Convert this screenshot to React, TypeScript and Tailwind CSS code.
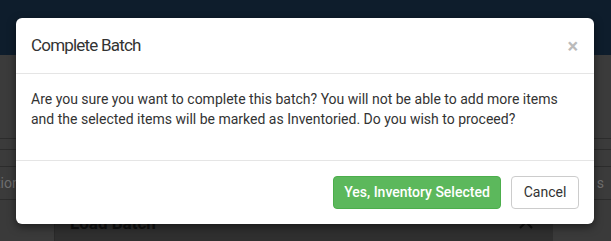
export default function App() {
  return (
    <div className="relative w-[611px] h-[241px] overflow-hidden bg-[#3b3b3b] font-['Roboto',sans-serif]">
      {/* page behind the backdrop */}
      <div className="h-[55px] bg-[#0e1d2c]" />
      <div className="flex flex-col">
        <div className="h-[84px] border-b border-[#2c2c2c]" />
        <div className="h-[11px] border-b border-[#2c2c2c]" />
        <div className="h-[17px] border-b border-[#2c2c2c]" />
        <div className="h-[33px] border-b border-[#2c2c2c] flex items-center justify-between text-[14px] text-[#6f6f6f]">
          <span className="-ml-[4px]">tion</span>
          <span className="mr-[7px]">s</span>
        </div>
        <div className="flex h-[41px]">
          <div className="w-[55px] border-r border-[#2a2a2a] bg-[#3a3a3a]" />
          <div className="w-[498px] bg-[#2f2f2f] flex items-start justify-between px-[15px] pt-[11px]">
            <span className="text-[17px] font-bold text-[#111]">Load Batch</span>
            <svg width="16" height="10" viewBox="0 0 16 10" className="mt-[8px] mr-[4px]">
              <path d="M2 9 L8 3 L14 9" stroke="#111" strokeWidth="2" fill="none" />
            </svg>
          </div>
          <div className="flex-1 bg-[#3a3a3a]" />
        </div>
      </div>

      {/* modal */}
      <div className="absolute left-[16px] top-[18px] w-[578px] h-[206px] rounded-[6px] bg-white shadow-[0_3px_9px_rgba(0,0,0,0.5)] flex flex-col">
        <div className="h-[56px] flex items-center justify-between px-[15px] border-b border-[#e5e5e5]">
          <h4 className="text-[17px] tracking-[-0.8px] text-[#333]">Complete Batch</h4>
          <span className="text-[20px] font-bold leading-none text-[#bbb] mr-[1px]">×</span>
        </div>
        <div className="px-[15px] pt-[15px] pb-[31px] text-[14px] leading-[20px] text-[#333]">
          Are you sure you want to complete this batch? You will not be able to add more items
          and the selected items will be marked as Inventoried. Do you wish to proceed?
        </div>
        <div className="flex-1 border-t border-[#e5e5e5] flex items-center justify-end gap-[10px] px-[15px]">
          <button className="h-[33px] w-[168px] rounded-[4px] bg-[#5cb85c] border border-[#4cae4c] text-white text-[14px] font-medium">
            Yes, Inventory Selected
          </button>
          <button className="h-[33px] w-[68px] rounded-[4px] bg-white border border-[#ccc] text-[#333] text-[14px]">
            Cancel
          </button>
        </div>
      </div>
    </div>
  );
}
